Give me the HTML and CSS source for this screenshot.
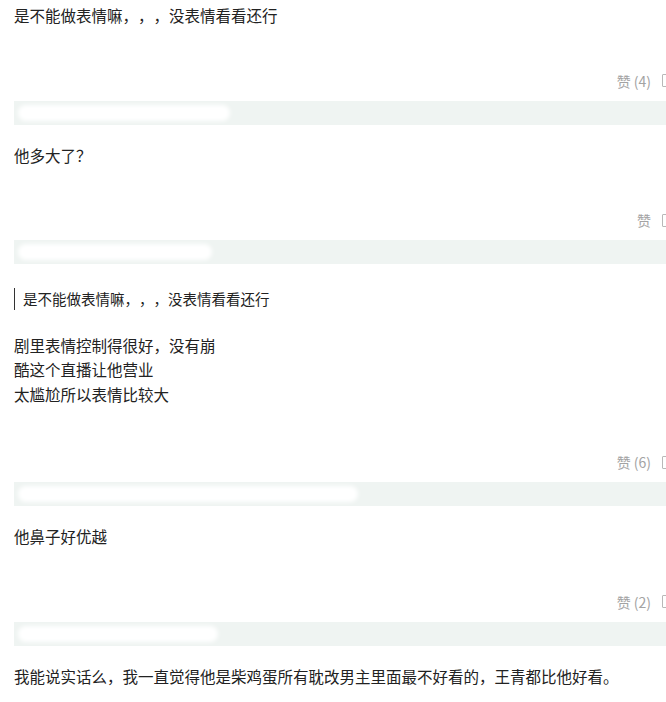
FILE: index.html
```html
<!DOCTYPE html>
<html lang="zh-CN">
<head>
    <meta charset="UTF-8">
    <meta name="viewport" content="width=device-width, initial-scale=1.0">
    <title>评论</title>
    <link rel="stylesheet" href="styles.css">
</head>
<body>
    <div class="comment-list">

        <div class="comment">
            <p class="comment-text">是不能做表情嘛，，，没表情看看还行</p>
            <div class="comment-meta">
                <span class="like">赞 (4)</span>
                <span class="reply-icon"></span>
            </div>
            <div class="reply-band"><span class="mask" style="width: 212px"></span></div>
        </div>

        <div class="comment">
            <p class="comment-text">他多大了？</p>
            <div class="comment-meta">
                <span class="like">赞</span>
                <span class="reply-icon"></span>
            </div>
            <div class="reply-band"><span class="mask" style="width: 194px"></span></div>
        </div>

        <div class="comment comment-quoted">
            <blockquote class="quote">是不能做表情嘛，，，没表情看看还行</blockquote>
            <p class="comment-text">剧里表情控制得很好，没有崩<br>酷这个直播让他营业<br>太尴尬所以表情比较大</p>
            <div class="comment-meta">
                <span class="like">赞 (6)</span>
                <span class="reply-icon"></span>
            </div>
            <div class="reply-band"><span class="mask" style="width: 340px"></span></div>
        </div>

        <div class="comment">
            <p class="comment-text">他鼻子好优越</p>
            <div class="comment-meta">
                <span class="like">赞 (2)</span>
                <span class="reply-icon"></span>
            </div>
            <div class="reply-band"><span class="mask" style="width: 200px"></span></div>
        </div>

        <div class="comment">
            <p class="comment-text">我能说实话么，我一直觉得他是柴鸡蛋所有耽改男主里面最不好看的，王青都比他好看。</p>
        </div>

    </div>
</body>
</html>
```

FILE: styles.css
```css
/* Page */
html, body {
    margin: 0;
    padding: 0;
    background: #fff;
    overflow: hidden;
}

body {
    font-family: "Noto Sans CJK SC", "Microsoft YaHei", sans-serif;
    color: #222;
    text-spacing-trim: space-all; /* keep full-width commas full width */
}

.comment-list {
    width: 666px;
    padding: 3px 0 0 14px;
    box-sizing: border-box;
}

/* One comment */
.comment {
    padding-bottom: 18px;
}

.comment-text {
    margin: 0;
    font-size: 15.5px;
    line-height: 24.5px;
    white-space: nowrap;
}

/* Quoted comment */
.quote {
    margin: 5.5px 0 23px 0;
    padding-left: 8px;
    border-left: 1.5px solid #333;
    font-size: 14.5px;
    line-height: 22px;
    color: #222;
}

/* Like + reply row */
.comment-meta {
    display: flex;
    justify-content: flex-end;
    align-items: center;
    gap: 11px;
    height: 20px;
    margin-top: 43px;
    margin-right: -6px; /* icon runs past the window edge */
    font-family: "Noto Sans CJK SC", "Liberation Sans", sans-serif;
    font-size: 14px;
    color: #a3a3a3;
}

.comment-quoted .comment-meta {
    margin-top: 46px;
}

.reply-icon {
    width: 10px;
    height: 13px;
    border: 1.5px solid #b8b8b8;
    border-radius: 1px;
    box-sizing: border-box;
}

/* Grey reply band with erased names */
.reply-band {
    position: relative;
    height: 24px;
    margin-top: 10px;
    background: #eff4f2;
    overflow: hidden;
}

.reply-band .mask {
    position: absolute;
    left: 4px;
    top: 4px;
    height: 16px;
    background: #fff;
    border-radius: 8px;
    filter: blur(2px);
}
```
